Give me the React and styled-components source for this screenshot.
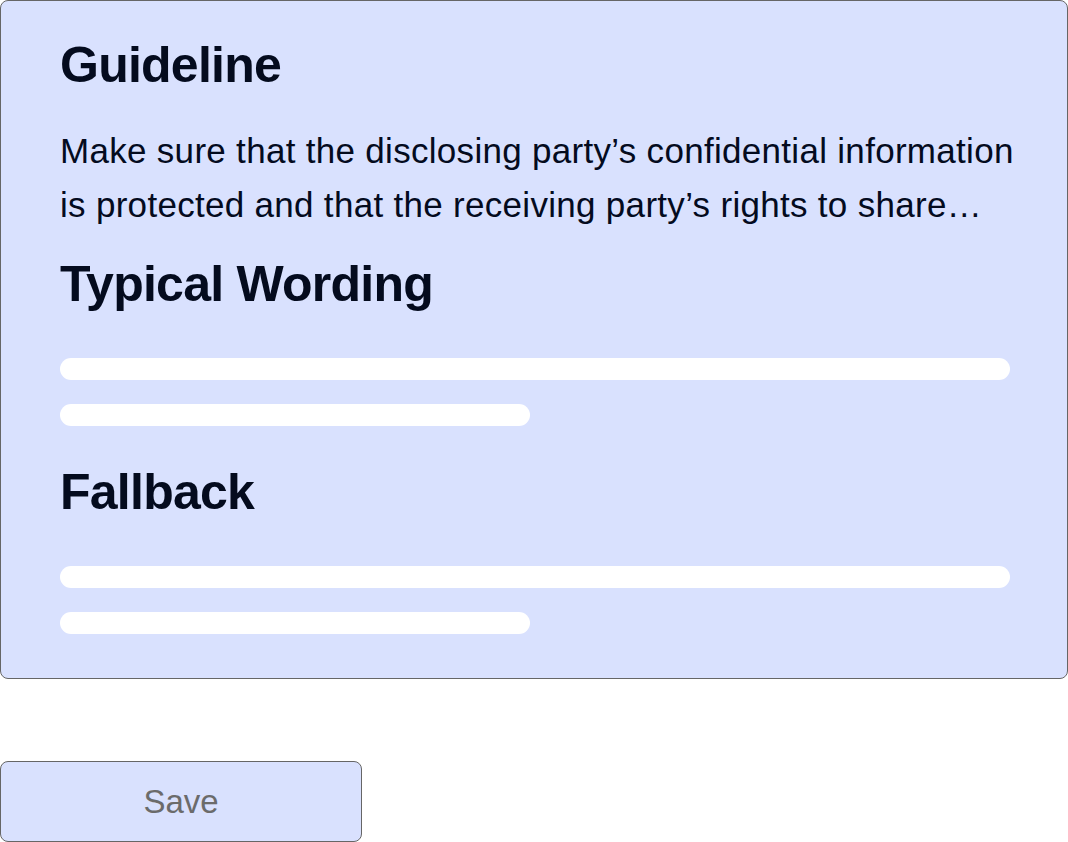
import React from "react";
import styled, { createGlobalStyle } from "styled-components";

const Global = createGlobalStyle`
  html, body { margin: 0; padding: 0; background: #ffffff; }
  * { box-sizing: border-box; }
`;

const Page = styled.div`
  width: 1068px;
  display: flex;
  flex-direction: column;
  align-items: flex-start;
  gap: 82px;
  font-family: "Liberation Sans", Arial, sans-serif;
`;

const Card = styled.section`
  width: 1068px;
  height: 679px;
  background: #d9e1fe;
  border: 1.5px solid #666666;
  border-radius: 8px;
  padding: 34px 40px 0 59px;
  display: flex;
  flex-direction: column;
  align-items: flex-start;
`;

const Heading = styled.h2`
  margin: ${(p) => p.$mt || 0}px 0 0 0;
  font-size: 50px;
  line-height: 60px;
  font-weight: 700;
  letter-spacing: -0.75px;
  color: #040b1e;
`;

const Body = styled.p`
  margin: 29px 0 0 0;
  font-size: 35px;
  line-height: 54px;
  letter-spacing: 0.3px;
  color: #040b1e;
  white-space: nowrap;
`;

const Bars = styled.div`
  margin-top: 44px;
  display: flex;
  flex-direction: column;
  gap: 24px;
`;

const Bar = styled.div`
  width: ${(p) => p.$w}px;
  height: 22px;
  border-radius: 11px;
  background: #ffffff;
`;

const SaveButton = styled.button`
  width: 362px;
  height: 81px;
  background: #d9e1fe;
  border: 1.5px solid #666666;
  border-radius: 8px;
  font-family: "Liberation Sans", Arial, sans-serif;
  font-size: 33px;
  color: #6b6b6b;
  display: flex;
  align-items: center;
  justify-content: center;
  padding: 0;
  cursor: pointer;
`;

export default function App() {
  return (
    <>
      <Global />
      <Page>
        <Card>
          <Heading>Guideline</Heading>
          <Body>
            Make sure that the disclosing party’s confidential information
            <br />
            is protected and that the receiving party’s rights to share…
          </Body>
          <Heading $mt={22}>Typical Wording</Heading>
          <Bars>
            <Bar $w={950} />
            <Bar $w={470} />
          </Bars>
          <Heading $mt={36}>Fallback</Heading>
          <Bars>
            <Bar $w={950} />
            <Bar $w={470} />
          </Bars>
        </Card>
        <SaveButton>Save</SaveButton>
      </Page>
    </>
  );
}
